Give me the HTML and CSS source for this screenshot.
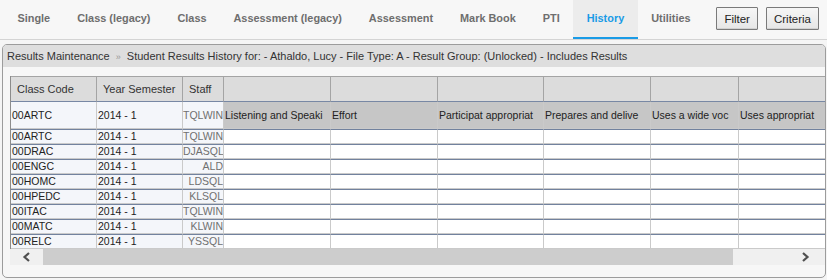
FILE: index.html
```html
<!doctype html>
<html>
<head>
    <title>Results Maintenance - History</title>
    <meta http-equiv="Content-Type" content="text/html; charset=utf-8" />
    <link rel="stylesheet" href="styles.css">
</head>
<body>
<div class="tabs">
    <ul class="tab-list">
        <li>Single</li>
        <li>Class (legacy)</li>
        <li>Class</li>
        <li>Assessment (legacy)</li>
        <li>Assessment</li>
        <li>Mark Book</li>
        <li>PTI</li>
        <li class="active">History</li>
        <li>Utilities</li>
    </ul>
    <div class="tab-actions">
        <button class="btn">Filter</button>
        <button class="btn">Criteria</button>
    </div>
</div>

<div class="panel">
    <div class="panel-head">Results Maintenance <span class="sep">&raquo;</span> Student Results History for: - Athaldo, Lucy - File Type: A - Result Group: (Unlocked) - Includes Results</div>
    <div class="grid-wrap">
        <div class="grid-clip">
            <table class="grid">
                <colgroup>
                    <col class="c-code"><col class="c-year"><col class="c-staff">
                    <col class="c-r1"><col class="c-r2"><col class="c-r3"><col class="c-r4"><col class="c-r5"><col class="c-r6">
                </colgroup>
                <thead>
                    <tr>
                        <th>Class Code</th><th>Year Semester</th><th>Staff</th>
                        <th></th><th></th><th></th><th></th><th></th><th></th>
                    </tr>
                </thead>
                <tbody>
                    <tr class="first">
                        <td class="key">00ARTC</td><td class="key">2014 - 1</td><td class="key staff">TQLWIN</td>
                        <td class="outcome">Listening and Speaki</td>
                        <td class="outcome">Effort</td>
                        <td class="outcome">Participat appropriat</td>
                        <td class="outcome">Prepares and delive</td>
                        <td class="outcome">Uses a wide voc</td>
                        <td class="outcome">Uses appropriat</td>
                    </tr>
                    <tr><td class="key">00ARTC</td><td class="key">2014 - 1</td><td class="key staff">TQLWIN</td><td></td><td></td><td></td><td></td><td></td><td></td></tr>
                    <tr><td class="key">00DRAC</td><td class="key">2014 - 1</td><td class="key staff">DJASQL</td><td></td><td></td><td></td><td></td><td></td><td></td></tr>
                    <tr><td class="key">00ENGC</td><td class="key">2014 - 1</td><td class="key staff">ALD</td><td></td><td></td><td></td><td></td><td></td><td></td></tr>
                    <tr><td class="key">00HOMC</td><td class="key">2014 - 1</td><td class="key staff">LDSQL</td><td></td><td></td><td></td><td></td><td></td><td></td></tr>
                    <tr><td class="key">00HPEDC</td><td class="key">2014 - 1</td><td class="key staff">KLSQL</td><td></td><td></td><td></td><td></td><td></td><td></td></tr>
                    <tr><td class="key">00ITAC</td><td class="key">2014 - 1</td><td class="key staff">TQLWIN</td><td></td><td></td><td></td><td></td><td></td><td></td></tr>
                    <tr><td class="key">00MATC</td><td class="key">2014 - 1</td><td class="key staff">KLWIN</td><td></td><td></td><td></td><td></td><td></td><td></td></tr>
                    <tr><td class="key">00RELC</td><td class="key">2014 - 1</td><td class="key staff">YSSQL</td><td></td><td></td><td></td><td></td><td></td><td></td></tr>
                </tbody>
            </table>
        </div>
        <div class="hscroll">
            <div class="hs-btn">
                <svg width="9" height="10" viewBox="0 0 9 10"><polyline points="7,1 2.5,5 7,9" fill="none" stroke="#505050" stroke-width="2.2"/></svg>
            </div>
            <div class="hs-thumb"></div>
            <div class="hs-track">
                <svg width="9" height="10" viewBox="0 0 9 10"><polyline points="2,1 6.5,5 2,9" fill="none" stroke="#505050" stroke-width="2.2"/></svg>
            </div>
        </div>
    </div>
</div>
</body>
</html>
```

FILE: styles.css
```css
html, body    { margin:0; padding:0; }
body          { background-color:#f5f5f5; font-family:"Liberation Sans", Arial, sans-serif; color:#222; width:827px; height:280px; overflow:hidden; }

/* top tab bar */
.tabs         { display:flex; height:39px; background-color:#f7f7f7; border-bottom:1px solid #d4d4d4; }
.tab-list     { display:flex; margin:0; padding:0 0 0 4px; list-style:none; flex:1; }
.tab-list li  { padding:0 13.5px; line-height:37px; height:37px; font-size:10.9px; font-weight:bold; color:#6e6e6e; border-bottom:2px solid transparent; white-space:nowrap; }
.tab-list li.active { background-color:#ececec; color:#1a9be6; border-bottom-color:#1a9be6; }
.tab-actions  { display:flex; gap:8px; padding:7px 8px 0 0; align-items:flex-start; }
.btn          { height:23px; padding:0 7px; font-family:"Liberation Sans", Arial, sans-serif; font-size:11.5px; color:#222; background:linear-gradient(#f6f6f6, #e6e6e6); border:1px solid #7a7a7a; border-radius:1px; box-shadow:inset 0 -1px 0 #d0d0d0; }

/* results panel */
.panel        { margin:4px 1px 0 2px; height:232px; background-color:#f7f7f7; border:1px solid #9c9c9c; border-radius:5px; overflow:hidden; }
.panel-head   { height:22px; line-height:22px; padding-left:4px; background-color:#dedede; font-size:11px; color:#333; white-space:nowrap; }
.panel-head .sep { color:#999; font-size:9px; padding:0 3px; }
.grid-wrap    { padding:9px 0 0 7px; }
.grid-clip    { overflow:hidden; }

.grid         { border-collapse:separate; border-spacing:0; table-layout:fixed; width:836px; border-left:1px solid #8c8c8c; }
.grid col.c-code  { width:86px; }
.grid col.c-year  { width:86px; }
.grid col.c-staff { width:41px; }
.grid col.c-r1    { width:107px; }
.grid col.c-r2    { width:107px; }
.grid col.c-r3    { width:106px; }
.grid col.c-r4    { width:107px; }
.grid col.c-r5    { width:88px; }
.grid col.c-r6    { width:107px; }

.grid th      { height:24px; padding:0 0 0 6px; text-align:left; font-weight:normal; font-size:11px; color:#333; background-color:#dcdcdc; border-top:1px solid #a4a4a4; border-right:1px solid #a4a4a4; border-bottom:1px solid #7888a4; white-space:nowrap; overflow:hidden; }
.grid td      { height:13px; padding:0 0 0 1px; font-size:10.5px; line-height:13px; background-color:#fff; border-top:1px solid #72829e; border-bottom:1px solid #cacaca; border-right:1px solid #cacaca; white-space:nowrap; overflow:hidden; }
.grid td.key  { background-color:#f4f6fa; }
.grid td.staff { text-align:right; color:#707070; padding:0; }
.grid tr.first td { height:26px; border-top:0; }
.grid td.outcome { background-color:#c6c6c6; padding-left:1px; color:#222; }

/* horizontal scroller */
.hscroll      { display:flex; height:16px; }
.hs-btn       { width:33px; background-color:#f0f0f0; display:flex; align-items:center; justify-content:center; }
.hs-thumb     { width:690px; background-color:#cdcdcd; }
.hs-track     { flex:1; background-color:#f0f0f0; display:flex; align-items:center; justify-content:flex-end; padding-right:15px; }
```
